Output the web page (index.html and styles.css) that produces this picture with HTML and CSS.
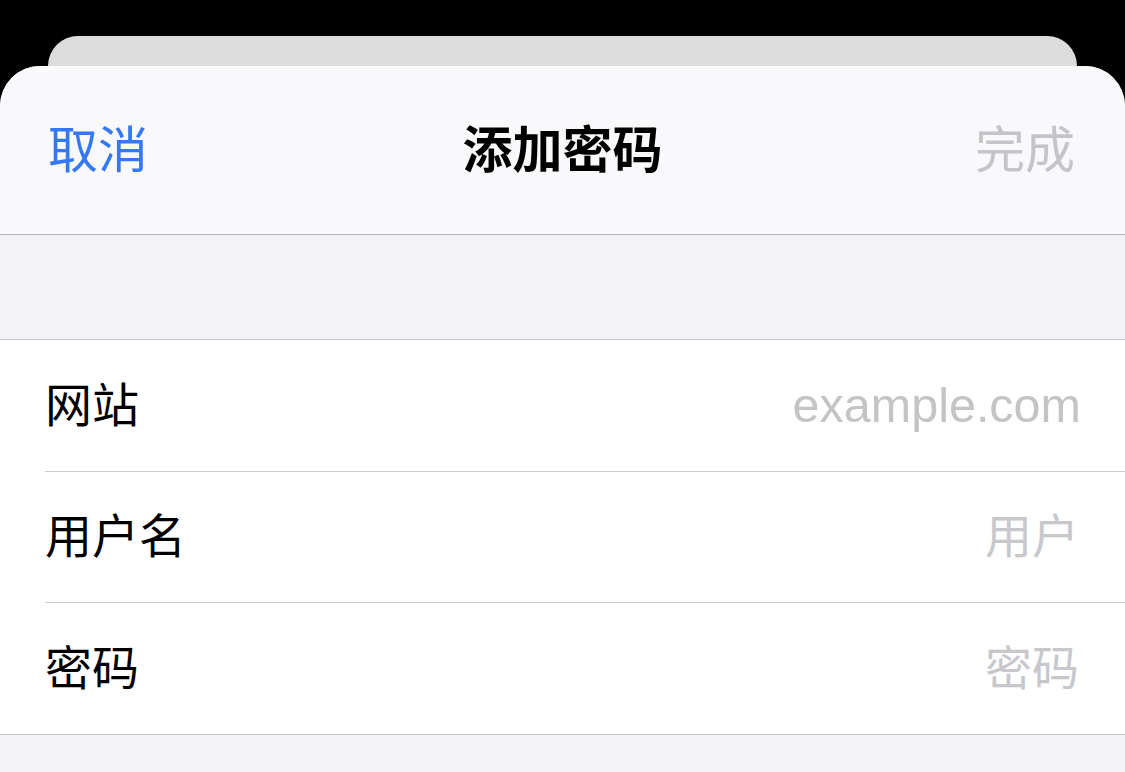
FILE: index.html
```html
<!DOCTYPE html>
<html lang="zh-CN">
<head>
<meta charset="utf-8">
<title>添加密码</title>
<link rel="stylesheet" href="styles.css">
</head>
<body>
<div class="stage">
  <div class="back-card"></div>
  <div class="sheet">
    <header class="nav">
      <span class="nav-btn cancel">取消</span>
      <span class="nav-title">添加密码</span>
      <span class="nav-btn done">完成</span>
    </header>
    <div class="gap"></div>
    <section class="group">
      <div class="row">
        <span class="label">网站</span>
        <span class="placeholder latin">example.com</span>
      </div>
      <div class="row">
        <span class="label">用户名</span>
        <span class="placeholder">用户</span>
      </div>
      <div class="row">
        <span class="label">密码</span>
        <span class="placeholder">密码</span>
      </div>
    </section>
    <div class="footer-gap"></div>
  </div>
</div>
</body>
</html>
```

FILE: styles.css
```css
html, body {
  margin: 0;
  padding: 0;
  background: #000;
  height: 100%;
  overflow: hidden;
}

body {
  font-family: "Noto Sans CJK SC", "Noto Sans", sans-serif;
}

.stage {
  padding-top: 36px;
  display: flex;
  flex-direction: column;
  height: 100%;
  box-sizing: border-box;
}

.back-card {
  margin: 0 48px;
  height: 30px;
  background: #dcdcdd;
  border-radius: 36px 36px 0 0;
}

.sheet {
  flex: 1;
  background: #f2f2f7;
  border-radius: 40px 40px 0 0;
  overflow: hidden;
  display: flex;
  flex-direction: column;
}

.nav {
  height: 169px;
  box-sizing: border-box;
  background: #f9f9fb;
  border-bottom: 1px solid #b4b4b6;
  display: flex;
  align-items: center;
  justify-content: space-between;
  padding: 0 50px 8px 48px;
  position: relative;
}

.nav-btn {
  font-size: 50px;
  line-height: 1;
}

.cancel {
  color: #3478f6;
}

.done {
  color: #c5c5c7;
}

.nav-title {
  position: absolute;
  left: 0;
  right: 0;
  top: 0;
  bottom: 8px;
  display: flex;
  align-items: center;
  justify-content: center;
  font-size: 50px;
  font-weight: 600;
  color: #000;
  line-height: 1;
  pointer-events: none;
}

.gap {
  height: 104px;
  border-bottom: 1px solid #c8c8cc;
}

.group {
  background: #fff;
  padding-left: 45px;
  border-bottom: 1px solid #c8c8cc;
}

.row {
  height: 131.67px;
  box-sizing: border-box;
  display: flex;
  align-items: center;
  justify-content: space-between;
  padding: 0 46px 8px 0;
  border-bottom: 1px solid #cfcfd2;
}

.row:last-child {
  border-bottom: none;
  height: 130.67px;
}

.label {
  font-size: 47px;
  color: #000;
  line-height: 1;
}

.placeholder {
  font-size: 47px;
  color: #c7c7cc;
  line-height: 1;
}

.placeholder.latin {
  font-family: "Liberation Sans", "Noto Sans", sans-serif;
  font-size: 48.5px;
  color: #c4c4c7;
  margin: 8px -2px 0 0;
}

.footer-gap {
  flex: 1;
}
```
